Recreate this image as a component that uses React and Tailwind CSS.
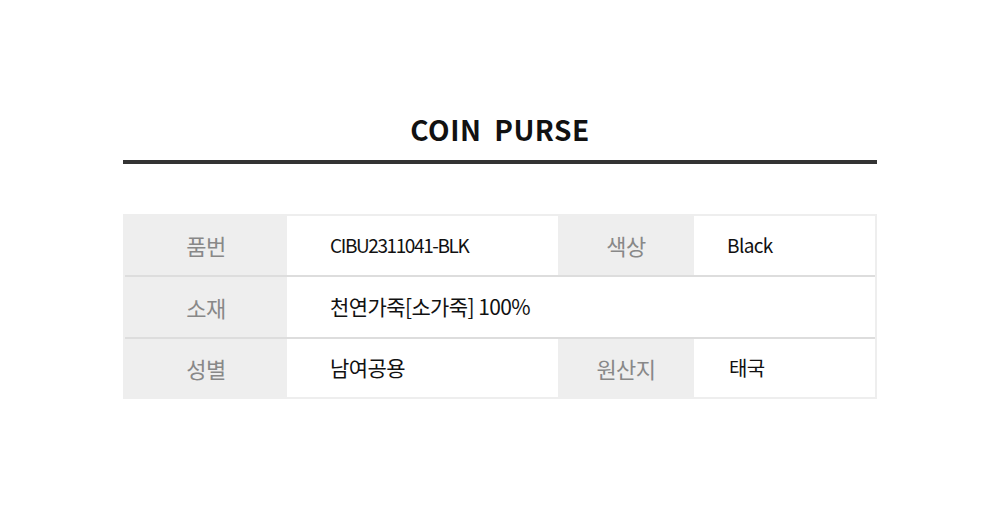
export default function App() {
  const font = { fontFamily: '"Noto Sans CJK KR", "Noto Sans", sans-serif' };
  const head = 'flex items-center justify-center bg-[#eee] text-[22px] tracking-[-0.5px] text-[#888]';
  const val = 'flex items-center text-[#111]';
  return (
    <div className="h-[517px] w-[1000px] bg-white" style={font}>
      <div className="mx-auto w-[754px] pt-[109px]">
        <h1 className="flex h-[40px] items-center justify-center text-[28px] font-bold leading-none tracking-[0.5px] text-[#111] [word-spacing:6px]">
          COIN PURSE
        </h1>
        <div className="mt-[11px] h-[4px] bg-[#333]" />

        <div className="mt-[50px] border-2 border-[#eee]">
          <div className="grid h-[61px] grid-cols-[162px_271px_136px_181px] border-b-2 border-[#ddd]">
            <div className={head}>품번</div>
            <div className={`${val} pl-[43px] text-[19px] tracking-[-1.4px]`}>CIBU2311041-BLK</div>
            <div className={head}>색상</div>
            <div className={`${val} pl-[33px] text-[19px] tracking-[-0.6px]`}>Black</div>
          </div>
          <div className="grid h-[62px] grid-cols-[162px_1fr] border-b-2 border-[#ddd]">
            <div className={head}>소재</div>
            <div className={`${val} pl-[43px] text-[21px] tracking-[-0.6px]`}>천연가죽[소가죽] 100%</div>
          </div>
          <div className="grid h-[58px] grid-cols-[162px_271px_136px_181px]">
            <div className={head}>성별</div>
            <div className={`${val} pl-[43px] text-[21px] tracking-[-0.6px]`}>남여공용</div>
            <div className={head}>원산지</div>
            <div className={`${val} pl-[35px] text-[20px] tracking-[-0.6px]`}>태국</div>
          </div>
        </div>
      </div>
    </div>
  );
}
